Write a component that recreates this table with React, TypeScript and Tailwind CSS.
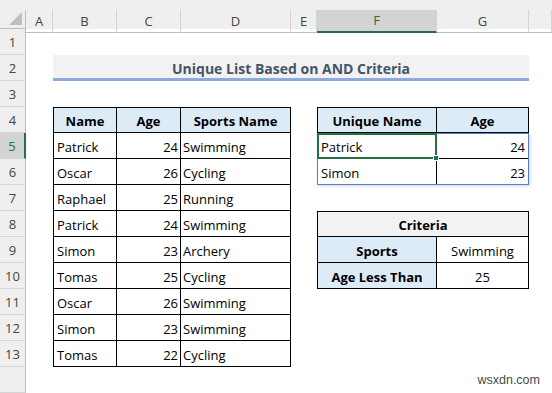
import React from "react";
import clsx from "clsx";

const COL: Record<string, string> = {
  A: "col-start-2",
  B: "col-start-3",
  C: "col-start-4",
  D: "col-start-5",
  E: "col-start-6",
  F: "col-start-7",
  G: "col-start-8",
  H: "col-start-9",
};

const ROW = [
  "row-start-1",
  "row-start-2",
  "row-start-3",
  "row-start-4",
  "row-start-5",
  "row-start-6",
  "row-start-7",
  "row-start-8",
  "row-start-9",
  "row-start-10",
  "row-start-11",
  "row-start-12",
  "row-start-13",
  "row-start-14",
  "row-start-15",
];

const players = [
  ["Patrick", "24", "Swimming"],
  ["Oscar", "26", "Cycling"],
  ["Raphael", "25", "Running"],
  ["Patrick", "24", "Swimming"],
  ["Simon", "23", "Archery"],
  ["Tomas", "25", "Cycling"],
  ["Oscar", "26", "Swimming"],
  ["Simon", "23", "Swimming"],
  ["Tomas", "22", "Cycling"],
];

// excel cells sit text near the bottom, hence the top padding
function Cell({
  c,
  r,
  className,
  children,
}: {
  c: string;
  r: number;
  className?: string;
  children?: React.ReactNode;
}) {
  return (
    <div className={clsx("flex items-center overflow-hidden whitespace-nowrap pt-[4px]", COL[c], ROW[r], className)}>
      {children}
    </div>
  );
}

function ColHeader({ label, active }: { label: string; active?: boolean }) {
  return (
    <div className="row-start-1 flex flex-col">
      <div className="h-[10px]" />
      <div
        className={clsx(
          "flex-1 flex items-center justify-center border-r border-[#d4d4d4] pt-[1px] text-[13px]",
          active ? "bg-[#d3d3d3] border-b-2 border-b-[#217346] text-[#217346]" : "border-b border-b-[#bdbdbd] text-[#444]"
        )}
      >
        {label}
      </div>
    </div>
  );
}

export default function App() {
  const rowNums = Array.from({ length: 14 }, (_, i) => i + 1);

  return (
    <div
      className="relative w-[552px] h-[393px] overflow-hidden bg-white text-black"
      style={{ fontFamily: '"Open Sans", "Noto Sans", sans-serif' }}
    >
      <div className="grid h-full grid-cols-[26px_27px_64px_64px_110px_26px_120px_92px_1fr] grid-rows-[29px_repeat(14,26px)] bg-white">
        {/* corner */}
        <div className="col-start-1 row-start-1 flex flex-col bg-[#efefef]">
          <div className="h-[10px]" />
          <div className="flex-1 flex items-end justify-end border-r border-b border-[#bdbdbd] pr-[3px] pb-[3px]">
            <svg width="13" height="13" viewBox="0 0 13 13">
              <polygon points="13,0 13,13 0,13" fill="#bfbfbf" />
            </svg>
          </div>
        </div>

        {/* column headers */}
        <div className="col-start-2 col-span-8 row-start-1 grid grid-cols-[27px_64px_64px_110px_26px_120px_92px_1fr] bg-[#efefef]">
          {["A", "B", "C", "D", "E", "F", "G", ""].map((l) => (
            <ColHeader key={l || "H"} label={l} active={l === "F"} />
          ))}
        </div>

        {/* row headers */}
        {rowNums.map((n) => (
          <div
            key={n}
            className={clsx(
              "col-start-1 flex items-center justify-center border-b border-[#d4d4d4] pt-[3px] text-[13px]",
              ROW[n],
              n === 5
                ? "bg-[#d3d3d3] border-r-2 border-r-[#217346] text-[#217346]"
                : "bg-[#efefef] border-r border-r-[#bdbdbd] text-[#444]"
            )}
          >
            {n <= 13 ? n : ""}
          </div>
        ))}

        {/* title */}
        <Cell
          c="B"
          r={2}
          className="col-span-6 justify-center bg-[#f2f2f2] border-b-[3px] border-[#8ea9db] text-[14px] font-bold text-[#44546a]"
        >
          Unique List Based on AND Criteria
        </Cell>

        {/* main table header */}
        {[
          ["B", "Name"],
          ["C", "Age"],
          ["D", "Sports Name"],
        ].map(([c, t]) => (
          <Cell
            key={c}
            c={c}
            r={4}
            className={clsx(
              "justify-center border-t border-r border-b border-black bg-[#ddebf7] text-[13px] font-bold",
              c === "B" && "border-l"
            )}
          >
            {t}
          </Cell>
        ))}

        {/* main table body */}
        {players.map(([name, age, sport], i) => (
          <React.Fragment key={i}>
            <Cell c="B" r={5 + i} className="border-l border-r border-b border-black pl-[3px] text-[13px]">
              {name}
            </Cell>
            <Cell c="C" r={5 + i} className="justify-end border-r border-b border-black pr-[2px] text-[13px]">
              {age}
            </Cell>
            <Cell c="D" r={5 + i} className="border-r border-b border-black pl-[2px] text-[13px]">
              {sport}
            </Cell>
          </React.Fragment>
        ))}

        {/* unique list */}
        <Cell c="F" r={4} className="justify-center border border-black bg-[#ddebf7] text-[13px] font-bold">
          Unique Name
        </Cell>
        <Cell c="G" r={4} className="justify-center border-t border-r border-b border-black bg-[#ddebf7] text-[13px] font-bold">
          Age
        </Cell>
        <Cell c="F" r={5} className="border-l border-r border-b border-black pl-[3px] text-[13px]">
          Patrick
        </Cell>
        <Cell c="G" r={5} className="justify-end border-r border-b border-black pr-[3px] text-[13px]">
          24
        </Cell>
        <Cell c="F" r={6} className="border-l border-r border-b border-black pl-[3px] text-[13px]">
          Simon
        </Cell>
        <Cell c="G" r={6} className="justify-end border-r border-b border-black pr-[3px] text-[13px]">
          23
        </Cell>

        {/* spill range outline */}
        <div className="col-start-7 col-span-2 row-start-6 row-span-2 pointer-events-none border border-[#5b7fc7] shadow-[1px_1px_3px_rgba(91,127,199,0.35)]" />

        {/* active cell */}
        <div className="relative col-start-7 row-start-6 pointer-events-none border-2 border-[#217346]">
          <div className="absolute -right-[4px] -bottom-[4px] w-[6px] h-[6px] bg-[#217346] border border-white" />
        </div>

        {/* criteria */}
        <Cell c="F" r={8} className="col-span-2 justify-center border border-black bg-[#f2f2f2] text-[13px] font-bold">
          Criteria
        </Cell>
        <Cell c="F" r={9} className="justify-center border-l border-r border-b border-black bg-[#ddebf7] text-[13px] font-bold">
          Sports
        </Cell>
        <Cell c="G" r={9} className="justify-center border-r border-b border-black text-[13px]">
          Swimming
        </Cell>
        <Cell c="F" r={10} className="justify-center border-l border-r border-b border-black bg-[#ddebf7] text-[13px] font-bold">
          Age Less Than
        </Cell>
        <Cell c="G" r={10} className="justify-center border-r border-b border-black text-[13px]">
          25
        </Cell>
      </div>

      {/* watermark */}
      <div
        className="absolute right-[12px] bottom-[3px] text-[12.5px] text-[#4a4a4a]"
        style={{ fontFamily: '"Liberation Sans", Arial, sans-serif' }}
      >
        wsxdn.com
      </div>
    </div>
  );
}
